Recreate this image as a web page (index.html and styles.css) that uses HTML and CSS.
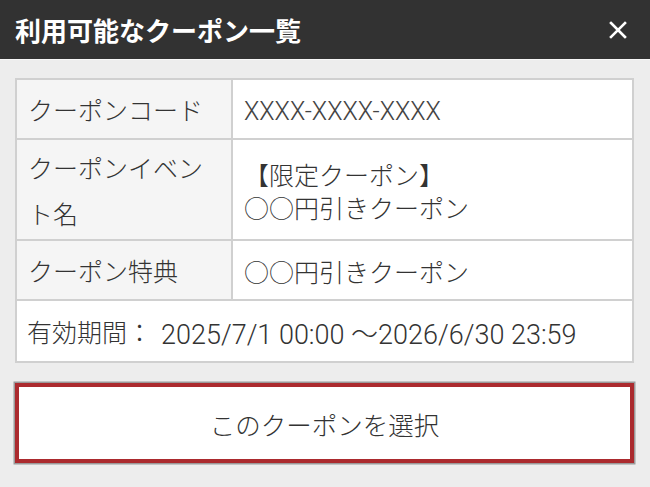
FILE: index.html
```html
<!DOCTYPE html>
<html lang="ja">
<head>
<meta charset="utf-8">
<link rel="stylesheet" href="styles.css">
</head>
<body>
<header class="head">
  <h1 class="title">利用可能なクーポン一覧</h1>
  <button class="close" aria-label="閉じる">
    <svg width="18" height="18" viewBox="0 0 18 18"><path d="M2 2 L16 16 M16 2 L2 16" stroke="#fff" stroke-width="2.6" stroke-linecap="square" fill="none"/></svg>
  </button>
</header>
<main class="body">
  <div class="grid">
    <div class="label">クーポンコード</div>
    <div class="value code">XXXX-XXXX-XXXX</div>
    <div class="label">クーポンイベント名</div>
    <div class="value">【限定クーポン】<br>○○円引きクーポン</div>
    <div class="label">クーポン特典</div>
    <div class="value">○○円引きクーポン</div>
    <div class="period"><span class="plabel">有効期間：</span><span class="date">2025/7/1 00:00 ～2026/6/30 23:59</span></div>
  </div>
  <button class="select">このクーポンを選択</button>
</main>
</body>
</html>
```
FILE: styles.css
```css
html, body {
  margin: 0;
  padding: 0;
}
body {
  width: 650px;
  height: 487px;
  background: #ededed;
  font-family: Roboto, "Noto Sans CJK JP", sans-serif;
  color: #333;
  overflow: hidden;
}
.head {
  height: 59px;
  background: #323232;
  border-bottom: 1px solid #f7f7f7;
  display: flex;
  align-items: center;
  justify-content: space-between;
  padding: 0 23px 0 15px;
}
.title {
  margin: 0;
  font-family: "Noto Sans CJK JP", sans-serif;
  font-size: 26px;
  font-weight: 700;
  color: #fff;
  letter-spacing: 0;
}
.close {
  background: none;
  border: 0;
  padding: 0;
  width: 18px;
  height: 18px;
  display: flex;
}
.body {
  padding: 18px 16px 0 15px;
}
.grid {
  display: grid;
  grid-template-columns: 214px 1fr;
  grid-template-rows: 58px 99px 58px 60px;
  gap: 2px;
  background: #d0d0d0;
  border: 2px solid #d0d0d0;
}
.label {
  background: #f5f5f5;
  font-family: "Noto Sans CJK JP", sans-serif;
  font-weight: 300;
  font-size: 25px;
  line-height: 46px;
  padding: 0 8px 0 11px;
  display: flex;
  align-items: center;
}
.value {
  background: #fff;
  font-family: "Noto Sans CJK JP", sans-serif;
  font-weight: 300;
  font-size: 25px;
  line-height: 33px;
  padding: 3px 11px 0 11px;
  display: flex;
  align-items: center;
}
.value.code {
  font-family: Roboto, sans-serif;
  font-weight: 300;
  color: #444;
  padding-top: 5px;
}
.period {
  grid-column: 1 / 3;
  background: #fff;
  display: flex;
  align-items: center;
  padding: 0 10px;
  font-size: 25px;
  gap: 9px;
}
.plabel {
  font-family: "Noto Sans CJK JP", sans-serif;
  font-weight: 300;
}
.date {
  font-size: 27px;
  font-weight: 300;
  padding-top: 2px;
}
.select {
  margin-top: 20px;
  width: 619px;
  height: 80px;
  background: #fff;
  border: 4px solid #ab2a2e;
  box-shadow: 0 0 0 1.5px #9a9a9a;
  font-family: "Noto Sans CJK JP", sans-serif;
  font-weight: 300;
  font-size: 25.5px;
  color: #333;
  display: flex;
  align-items: center;
  justify-content: center;
  padding: 0;
}
```
